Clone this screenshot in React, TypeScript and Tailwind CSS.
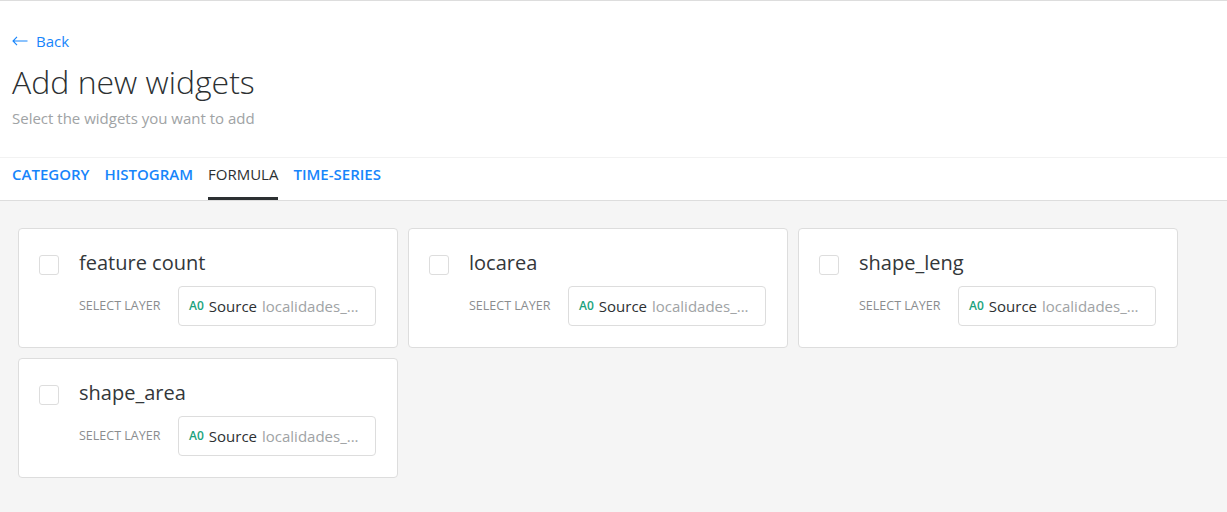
const widgets = ["feature count", "locarea", "shape_leng", "shape_area"];

const tabs = ["CATEGORY", "HISTOGRAM", "FORMULA", "TIME-SERIES"];

export default function App() {
  return (
    <div className="w-[1227px] h-[512px] bg-[#f5f5f5] font-['Open_Sans',sans-serif] overflow-hidden">
      {/* ── Header ─────────────────────────────── */}
      <header className="bg-white border-t border-[#dddddd] px-3 pb-[28px]">
        <a className="flex items-center gap-2 pt-[29px] text-[15px] text-[#1785fb] leading-[22px]">
          <svg width="16" height="10" viewBox="0 0 16 10" fill="none" stroke="#1785fb" strokeWidth="1.1">
            <path d="M15.5 5H1M5 0.8L1 5l4 4.2" />
          </svg>
          <span>Back</span>
        </a>
        <h1 className="mt-[10px] text-[32px] font-light leading-[40px] text-[#2c3032]">
          Add new widgets
        </h1>
        <p className="mt-[5px] text-[15px] leading-[22px] text-[#a0a3a5]">
          Select the widgets you want to add
        </p>
      </header>

      {/* ── Tabs ───────────────────────────────── */}
      <nav className="bg-white border-t border-[#f2f2f2] border-b border-b-[#dddddd] px-3 flex gap-[15px] h-[44px]">
        {tabs.map((t) => (
          <div
            key={t}
            className={
              t === "FORMULA"
                ? "flex items-center text-[15px] font-normal text-[#2c3032] border-b-[3px] border-[#2c3032] pb-[7px]"
                : "flex items-center text-[15px] font-semibold text-[#1785fb] border-b-[3px] border-transparent pb-[7px]"
            }
          >
            {t}
          </div>
        ))}
      </nav>

      {/* ── Cards ──────────────────────────────── */}
      <div className="px-[18px] pt-[27px] grid grid-cols-[380px_380px_380px] gap-[10px]">
        {widgets.map((w) => (
          <div key={w} className="h-[120px] bg-white border border-[#dddddd] rounded-[4px] flex pl-[20px] pt-[26px]">
            <div className="w-[20px] h-[20px] border border-[#dddddd] rounded-[3px] mr-[20px]" />
            <div className="flex flex-col">
              <div className="text-xl leading-[20px] text-[#33373a] -mt-[2px] mb-[1px]">{w}</div>
              <div className="flex items-center mt-[12px]">
                <span className="text-[12.5px] text-[#8a8d8f] w-[99px]">SELECT LAYER</span>
                <div className="w-[198px] h-[40px] border border-[#dddddd] rounded-[4px] flex items-center px-[10px] gap-[5px]">
                  <span className="text-xs font-semibold text-[#1aa37c]">A0</span>
                  <span className="text-[15px] text-[#2c3032]">Source</span>
                  <span className="text-[15px] text-[#a0a3a5]">localidades_...</span>
                </div>
              </div>
            </div>
          </div>
        ))}
      </div>
    </div>
  );
}
